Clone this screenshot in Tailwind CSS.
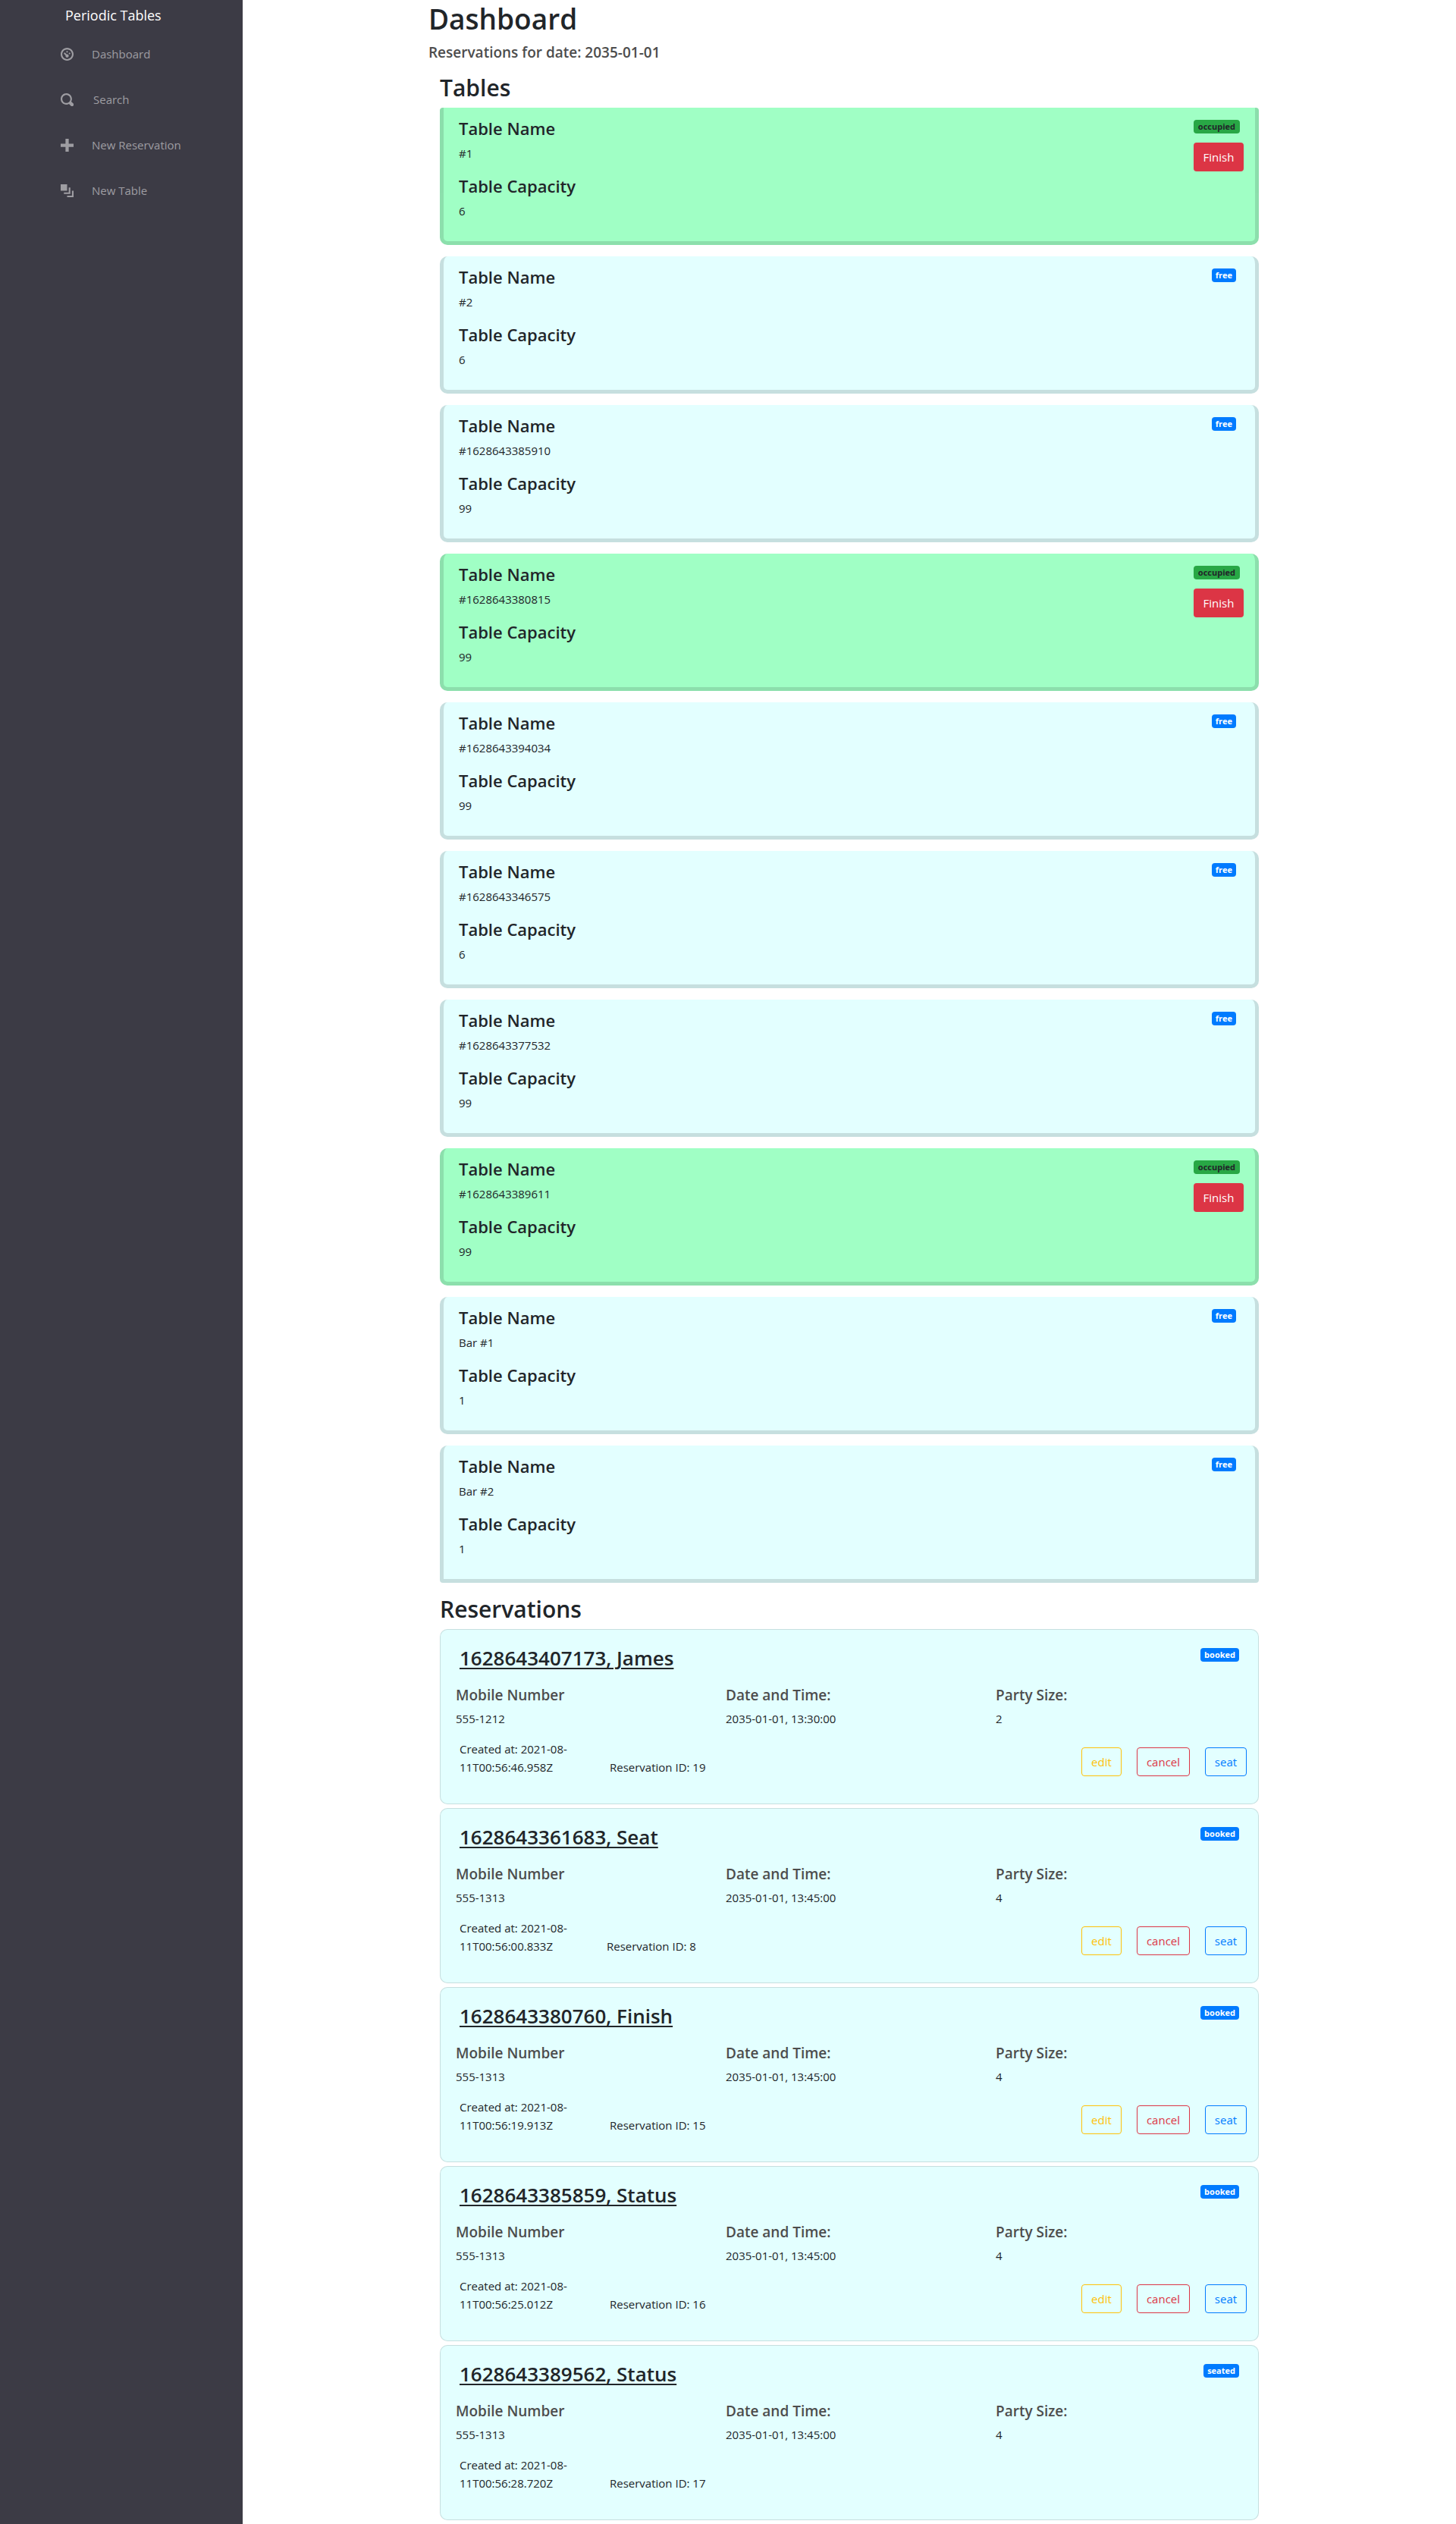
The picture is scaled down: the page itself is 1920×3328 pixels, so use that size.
<!DOCTYPE html>
<html lang="en">
<head>
<meta charset="utf-8">
<title>Periodic Tables</title>
<script src="https://cdn.jsdelivr.net/npm/@tailwindcss/browser@4"></script>
</head>
<body class="bg-white font-['Open_Sans','Noto_Sans',sans-serif] text-[15px] leading-6 text-[#212529]">
<div class="flex min-h-screen">
  <aside class="w-1/6 shrink-0 bg-[#3c3b45]">
    <a href="#" class="block pt-2 pl-[86px] text-lg leading-6 text-white">Periodic Tables</a>
    <nav class="flex flex-col gap-9 pt-[27px] pl-20 text-[#9e9da2]">
      <a href="#" class="flex items-center gap-6">
        <svg class="size-[17px]" viewBox="0 0 8 8" fill="currentColor" aria-hidden="true"><path d="M4 0c-2.200 0-4 1.800-4 4s1.800 4 4 4 4-1.800 4-4-1.800-4-4-4zm0 1c1.660 0 3 1.340 3 3s-1.340 3-3 3-3-1.340-3-3 1.340-3 3-3zm0 1c-.28 0-.5.22-.5.5s.22.5.5.5.5-.22.5-.5-.22-.5-.5-.5zm-1.660 1a.5.5 0 0 0-.19.84l.91.91c-.02.08-.06.16-.06.25 0 .55.45 1 1 1s1-.45 1-1-.45-1-1-1c-.09 0-.17.04-.25.06l-.91-.91a.5.5 0 0 0-.44-.16.5.5 0 0 0-.06 0zm3.160 0c-.28 0-.5.22-.5.5s.22.5.5.5.5-.22.5-.5-.22-.5-.5-.5z"/></svg>
        <span>Dashboard</span></a>
      <a href="#" class="flex items-center gap-[26px]">
        <svg class="size-[17px]" viewBox="0 0 8 8" fill="currentColor" aria-hidden="true"><path d="M3.500 0c-1.930 0-3.500 1.570-3.500 3.500s1.570 3.500 3.500 3.500c.59 0 1.170-.14 1.660-.41a1 1 0 0 0 .13.13l1 1a1.020 1.020 0 1 0 1.440-1.440l-1-1a1 1 0 0 0-.16-.13c.27-.49.44-1.060.44-1.660 0-1.930-1.550-3.500-3.480-3.500zm.03 1c1.390 0 2.480 1.110 2.480 2.500 0 .66-.24 1.270-.66 1.720l-.03.03a1 1 0 0 0-.13.13c-.44.4-1.040.63-1.690.63-1.390 0-2.480-1.110-2.480-2.500s1.110-2.500 2.500-2.500z"/></svg>
        <span>Search</span></a>
      <a href="#" class="flex items-center gap-6">
        <svg class="size-[17px]" viewBox="0 0 8 8" fill="currentColor" aria-hidden="true"><path d="M3 0v3h-3v2h3v3h2v-3h3v-2h-3v-3h-2z"/></svg>
        <span>New Reservation</span></a>
      <a href="#" class="flex items-center gap-6">
        <svg class="size-[17px]" viewBox="0 0 8 8" fill="currentColor" aria-hidden="true"><path d="M0 0v4h4v-4h-4zm5 2v3h-3v1h4v-4h-1zm2 2v3h-3v1h4v-4h-1z"/></svg>
        <span>New Table</span></a>
    </nav>
  </aside>
  <main class="min-w-0 flex-1">
    <div class="mx-auto max-w-[1110px]">
      <h1 class="pt-px text-[37px] leading-12 font-semibold">Dashboard</h1>
      <h2 class="pt-2 text-[19px] leading-6 font-semibold text-[#4d4d4d]">Reservations for date: 2035-01-01</h2>
      <section class="px-[15px] pt-4">
        <h2 class="mb-[7px] text-[30px] leading-[38px] font-semibold">Tables</h2>
        <div id="tables" class="flex flex-col gap-[15px]"></div>
      </section>
      <section class="px-[15px] pt-4 pb-[5px]">
        <h2 class="mb-[7px] text-[30px] leading-[38px] font-semibold">Reservations</h2>
        <div id="reservations" class="flex flex-col gap-[5px]"></div>
      </section>
    </div>
  </main>
</div>
<script>
const tables = [
  ['#1', 6, true], ['#2', 6, false], ['#1628643385910', 99, false], ['#1628643380815', 99, true],
  ['#1628643394034', 99, false], ['#1628643346575', 6, false], ['#1628643377532', 99, false],
  ['#1628643389611', 99, true], ['Bar #1', 1, false], ['Bar #2', 1, false],
];
const reservations = [
  ['1628643407173, James', '555-1212', '13:30:00', 2, '56:46.958Z', 19, 'booked'],
  ['1628643361683, Seat', '555-1313', '13:45:00', 4, '56:00.833Z', 8, 'booked'],
  ['1628643380760, Finish', '555-1313', '13:45:00', 4, '56:19.913Z', 15, 'booked'],
  ['1628643385859, Status', '555-1313', '13:45:00', 4, '56:25.012Z', 16, 'booked'],
  ['1628643389562, Status', '555-1313', '13:45:00', 4, '56:28.720Z', 17, 'seated'],
];
const badge = 'rounded text-[11px] leading-[18px] font-bold';

document.getElementById('tables').innerHTML = tables.map(([name, capacity, occupied], i) => `
  <article class="flex justify-between border-x-[5px] border-b-[5px] border-black/12.5 pt-[13px] pb-[11px] pr-[15px] pl-5
    ${i === 0 ? 'rounded-t' : 'rounded-t-[10px]'} ${i === tables.length - 1 ? 'rounded-b' : 'rounded-b-[10px]'}
    ${occupied ? 'bg-[#a0ffc5]' : 'bg-[#e3ffff]'}">
    <div>
      <h3 class="mb-[7px] text-[22px] leading-7 font-semibold">Table Name</h3>
      <p class="mb-[17px]">${name}</p>
      <h3 class="mb-[7px] text-[22px] leading-7 font-semibold">Table Capacity</h3>
      <p class="mb-[17px]">${capacity}</p>
    </div>
    <div class="flex flex-col items-end gap-3 pt-[3px]">
      ${occupied
        ? `<span class="${badge} mr-[5px] px-1.5 bg-[#28a745]">occupied</span>
           <button type="button" class="h-[38px] w-[66px] rounded bg-[#dc3545] text-white">Finish</button>`
        : `<span class="${badge} mr-[10px] px-[5px] bg-[#007bff] text-white">free</span>`}
    </div>
  </article>`).join('');

document.getElementById('reservations').innerHTML = reservations.map(([name, phone, time, size, created, id, status]) => `
  <article class="rounded-[10px] border border-black/12.5 bg-[#e3ffff] pt-5 pb-9">
    <div class="flex items-start justify-between px-[25px]">
      <h3 class="text-[26px] leading-[34px] font-semibold underline decoration-2 underline-offset-[3px]">${name}</h3>
      <span class="${badge} mt-1 px-[5px] bg-[#007bff] text-white">${status}</span>
    </div>
    <dl class="grid grid-cols-3 pt-5 pr-1 pl-1.5">
      ${[['Mobile Number', phone], ['Date and Time:', '2035-01-01, ' + time], ['Party Size:', size]].map(([k, v]) => `
      <div class="pl-3.5"><dt class="mb-[7px] text-[19px] leading-6 font-semibold text-[#4d4d4d]">${k}</dt><dd>${v}</dd></div>`).join('')}
    </dl>
    <div class="flex items-end pt-4 pr-[15px] pl-[25px]">
      <p class="${id < 10 ? 'w-[194px]' : 'w-[198px]'}">Created at: 2021-08-<br>11T00:${created}</p>
      <p>Reservation ID: ${id}</p>
      ${status === 'booked' ? `
      <div class="ml-auto flex gap-5">
        <button type="button" class="h-[38px] w-[53px] rounded border border-[#ffc107] text-[#ffc107]">edit</button>
        <button type="button" class="h-[38px] w-[70px] rounded border border-[#dc3545] text-[#dc3545]">cancel</button>
        <button type="button" class="h-[38px] w-[55px] rounded border border-[#007bff] text-[#007bff]">seat</button>
      </div>` : ''}
    </div>
  </article>`).join('');
</script>
</body>
</html>
